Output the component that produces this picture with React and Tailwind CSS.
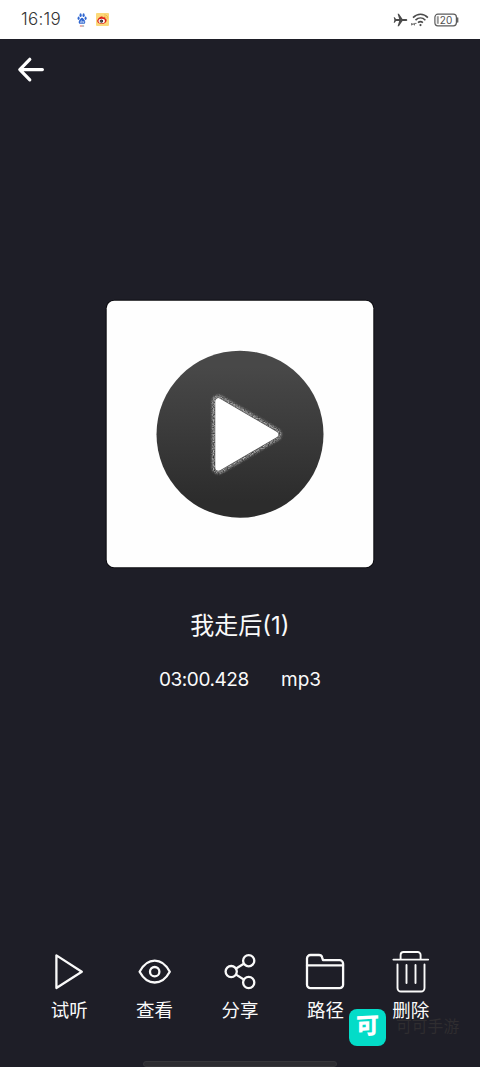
const actions = [
  { label: '试听', icon: PlayIcon },
  { label: '查看', icon: EyeIcon },
  { label: '分享', icon: ShareIcon },
  { label: '路径', icon: FolderIcon },
  { label: '删除', icon: TrashIcon },
];

function ActionSvg({ children }) {
  return (
    <svg
      className="w-11 h-11"
      viewBox="0 0 44 44"
      fill="none"
      stroke="currentColor"
      strokeWidth="2.3"
      strokeLinecap="round"
      strokeLinejoin="round"
    >
      {children}
    </svg>
  );
}

function PlayIcon() {
  return (
    <ActionSvg>
      <path d="M9.4 5.4v32.6l25.400-16.300z" />
    </ActionSvg>
  );
}

function EyeIcon() {
  return (
    <ActionSvg>
      <path d="M6.600 21.700C10.600 14.400 15.800 10.700 21.700 10.700s11.100 3.700 15.100 11C32.800 29 27.600 32.500 21.700 32.500S10.600 29 6.600 21.700z" />
      <circle cx="21.700" cy="21.700" r="4.700" />
    </ActionSvg>
  );
}

function ShareIcon() {
  return (
    <ActionSvg>
      <circle cx="13.200" cy="21.600" r="5.600" />
      <circle cx="30.700" cy="10.700" r="5.600" />
      <circle cx="30.700" cy="32.500" r="5.600" />
      <path d="M18.100 18.500l7.700-4.800M18.100 24.600l7.700 4.900" />
    </ActionSvg>
  );
}

function FolderIcon() {
  return (
    <ActionSvg>
      <path d="M4 8.500a3.500 3.500 0 0 1 3.500-3.500h8.500c1.600 0 2.700.8 3.100 2.300l.9 2.900h16.600a3.500 3.500 0 0 1 3.500 3.500v21a3.500 3.500 0 0 1-3.500 3.500H7.500a3.500 3.500 0 0 1-3.500-3.500z" />
      <path d="M4 15.300h36" />
    </ActionSvg>
  );
}

function TrashIcon() {
  return (
    <ActionSvg>
      <g strokeWidth="1.900">
        <path d="M4.400 9.600h34.800M11.600 9.300V5a3 3 0 0 1 3-3h14a3 3 0 0 1 3 3v4.300" />
        <path d="M8.500 14.500v23.500a3.500 3.500 0 0 0 3.500 3.500h20a3.500 3.500 0 0 0 3.500-3.500V14.500M17.500 15v18M26.500 15v18" />
      </g>
    </ActionSvg>
  );
}

function BaiduIcon() {
  return (
    <svg className="w-[10px] h-[14px]" viewBox="0 0 12 14" preserveAspectRatio="none" fill="#2f66d0">
      <ellipse cx="4.300" cy="2.200" rx="1.300" ry="1.900" />
      <ellipse cx="7.900" cy="2.200" rx="1.300" ry="1.900" />
      <ellipse cx="1.900" cy="5.300" rx="1.200" ry="1.700" />
      <ellipse cx="10.300" cy="5.300" rx="1.200" ry="1.700" />
      <path d="M6 4.700c1.200 0 1.900 1.300 2.900 2.200 1.400 1.200 1.500 3.800-.8 3.900H4C1.600 10.700 1.600 8.200 3.100 6.900 4.100 6 4.800 4.700 6 4.700z" />
      <path d="M5.300 7.300v2.300H4.300V8.400M6.900 8v1.600h1.300V8" fill="none" stroke="#fff" strokeWidth=".6" />
      <path d="M3.500 13h2.500" stroke="#d84a4a" strokeWidth="1" />
      <path d="M6 13h2.500" stroke="#777" strokeWidth="1" />
    </svg>
  );
}

function WeiboIcon() {
  return (
    <svg className="w-[13px] h-[13px]" viewBox="0 0 13 13">
      <rect width="13" height="13" rx="1" fill="#fbd97a" />
      <path d="M5 3.600c1.200-.5 2 0 1.800 1 1.600-.6 2.800-.2 2.500 1 1.200.5 1.900 2 .8 3.300-1.800 2.600-8.100 2.600-8.800-.3C.8 7 3 4.400 5 3.600z" fill="#dd2018" />
      <ellipse cx="5.700" cy="8" rx="3.200" ry="2.200" fill="#fff" />
      <circle cx="5.400" cy="8.100" r="1.700" fill="#222" />
      <circle cx="5" cy="8" r=".5" fill="#fff" />
      <path d="M8.200 3.700c1.300-.2 2 .6 1.800 1.800M8.200 1.900c2.500-.2 3.900 1.500 3.500 3.800" fill="none" stroke="#f3b24c" strokeWidth=".9" />
    </svg>
  );
}

function StatusBar() {
  return (
    <div className="h-[39px] px-[21px] flex items-center bg-white">
      <span className="w-[51px] text-[17px] leading-none font-light tracking-[0.3px] text-[#333]">
        16:19
      </span>
      <span className="mr-[9px] pl-[5px]">
        <BaiduIcon />
      </span>
      <WeiboIcon />

      <div className="ml-auto flex items-center">
        <svg className="w-[15px] h-[14px] mr-[3px]" viewBox="0 0 15 14" fill="#4b4b4b">
          <path d="M14.300 7c0-.7-.6-1.100-1.500-1.100H9.500L5.900.7H4.600l1.600 5.200H3L1.700 4.200H.7L1.400 7 .7 9.800h1L3 8.100h3.200l-1.600 5.200h1.300l3.600-5.200h3.300c.9 0 1.500-.4 1.500-1.100z" />
        </svg>
        <svg className="w-[18px] h-[14px] mr-[5px]" viewBox="0 0 18 14" fill="none" stroke="#4b4b4b" strokeWidth="1.600">
          <path d="M2 4.600c4.500-4.400 10.600-4.400 14.900 0M4.500 7.200c3-2.900 7-2.900 9.900 0M7 9.700c1.500-1.300 3.400-1.300 4.900 0" />
          <circle cx="9.500" cy="12.100" r="1.100" fill="#4b4b4b" stroke="none" />
          <path d="M.6 12.400v-2l1.500 1.500V10M3.500 12.400v-2h2" strokeWidth=".8" />
        </svg>
        <svg className="w-[25px] h-[14px]" viewBox="0 0 25 14">
          <rect x=".9" y="1.200" width="21.500" height="11.600" rx="3" fill="none" stroke="#5b5b5b" strokeWidth="1.200" />
          <path d="M23.700 5v4" stroke="#5b5b5b" strokeWidth="1.300" strokeLinecap="round" />
          <rect x="2.800" y="3.200" width="2" height="7.600" fill="#999" />
          <text x="5.800" y="10.600" fontSize="10" fontFamily="Inter, sans-serif" fill="#505050">
            20
          </text>
        </svg>
      </div>
    </div>
  );
}

function Cover() {
  return (
    <svg className="w-[276px] h-[276px]" viewBox="0 0 276 276">
      <defs>
        <linearGradient id="disc" x1="0" y1="0" x2="0" y2="1">
          <stop offset="0.1" stopColor="#484848" />
          <stop offset="0.9" stopColor="#2c2c2c" />
        </linearGradient>
        <filter id="grain" x="-15%" y="-15%" width="130%" height="130%" colorInterpolationFilters="sRGB">
          <feGaussianBlur in="SourceGraphic" stdDeviation="0.8" result="edge" />
          <feTurbulence type="fractalNoise" baseFrequency="0.8" numOctaves="2" seed="4" />
          <feColorMatrix values="0 0 0 0 .78  0 0 0 0 .78  0 0 0 0 .78  1.8 0 0 0 -0.35" />
          <feComposite in2="edge" operator="in" />
        </filter>
      </defs>
      <rect x="3.700" y="3.700" width="268.600" height="268.600" rx="9" fill="#08080c" />
      <rect x="4.700" y="4.700" width="266.600" height="266.600" rx="7.500" fill="#fefefe" />
      <circle cx="138" cy="138.200" r="83.500" fill="url(#disc)" />
      <g strokeLinejoin="round">
        <path d="M116.500 105.500v66L173 138.500z" fill="none" stroke="#fff" strokeWidth="13" filter="url(#grain)" />
        <path d="M116.500 105.500v66L173 138.500z" fill="#fff" stroke="#4a4a4a" strokeWidth="7.600" />
        <path d="M116.500 105.500v66L173 138.500z" fill="#fff" stroke="#fff" strokeWidth="6.500" />
      </g>
    </svg>
  );
}

export default function App() {
  return (
    <div className="relative w-[480px] h-[1067px] flex flex-col overflow-hidden bg-[#1e1e27] text-[#fafafa] font-[Inter,'Noto_Sans_CJK_SC',sans-serif]">
      <StatusBar />

      <header className="h-[61px] pl-[17px]">
        <button type="button" aria-label="返回" className="block pt-[17px]">
          <svg className="w-7 h-7" viewBox="0 0 28 28" fill="none" stroke="#fff" strokeWidth="3.200" strokeLinecap="round" strokeLinejoin="round">
            <path d="M12.800 3.300L2.800 13.600l10 10.200M3.600 13.600h21.800" />
          </svg>
        </button>
      </header>

      <main className="pt-[196px] flex flex-col items-center">
        <Cover />
        <h1 className="mt-[36px] h-9 leading-9 text-[24px] font-normal whitespace-nowrap">我走后(1)</h1>
        <div className="mt-[22px] w-[162px] flex justify-between text-[19px] leading-7">
          <span className="tracking-[-0.45px]">03:00.428</span>
          <span>mp3</span>
        </div>
      </main>

      <nav className="mt-auto mb-[44px] w-[427px] self-center grid grid-cols-5">
        {actions.map(({ label, icon: Icon }) => (
          <button key={label} type="button" className="flex flex-col items-center">
            <Icon />
            <span className="mt-1 h-[25px] leading-[25px] text-[18.500px] whitespace-nowrap">{label}</span>
          </button>
        ))}
      </nav>

      {/* Floating brand badge */}
      <div className="absolute left-[349px] top-[1008.500px] flex items-center gap-[10px]">
        <div className="w-[37px] h-[37px] flex items-center justify-center rounded-lg bg-[#03dcc8] text-[23px] leading-none font-black text-white">
          <span className="-translate-y-px -skew-y-3">可</span>
        </div>
        <span className="text-[15.800px] leading-none text-[#2f2d30] whitespace-nowrap">可可手游</span>
      </div>

      {/* Gesture bar */}
      <div className="absolute left-[143px] top-[1061px] w-[194px] h-[6px] rounded-full border border-[#36363a] bg-[#2c2c31]" />
    </div>
  );
}
